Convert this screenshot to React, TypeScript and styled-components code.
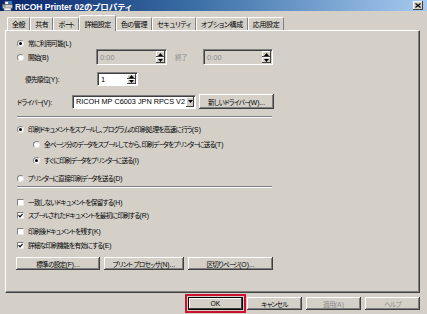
import React from 'react';
import styled, { createGlobalStyle } from 'styled-components';

const Global = createGlobalStyle`
  html, body { margin: 0; padding: 0; background: #d4d0c8; }
  body {
    font-family: "Liberation Sans", "Noto Sans CJK JP", sans-serif;
    font-size: 6.6px;
    letter-spacing: -0.7px;
    color: #000;
    font-feature-settings: "palt";
  }
  * { box-sizing: border-box; }
`;

const Window = styled.div`
  width: 427px;
  height: 314px;
  display: flex;
  flex-direction: column;
  overflow: hidden;
  background: #d4d0c8;
`;

const TitleBar = styled.div`
  height: 11px;
  flex: none;
  display: flex;
  align-items: center;
  padding: 0 4px 0 2px;
  background: linear-gradient(to right, #0a246a 0%, #3a6ea5 45%, #a6caf0 100%);
`;

const TitleText = styled.span`
  color: #fff;
  font-weight: bold;
  font-size: 8.5px;
  letter-spacing: 0;
  margin-left: 2px;
  flex: 1;
  white-space: nowrap;
`;

const CloseBtn = styled.div`
  width: 10px;
  height: 9px;
  background: #d4d0c8;
  box-shadow: inset -1px -1px #404040, inset 1px 1px #fff;
  display: flex;
  align-items: center;
  justify-content: center;
`;

const TabStrip = styled.div`
  height: 19px;
  flex: none;
  display: flex;
  align-items: flex-end;
  padding-left: 7px;
  position: relative;
  z-index: 1;
`;

const Tab = styled.div<{ $active?: boolean }>`
  height: ${(p) => (p.$active ? '16px' : '13px')};
  margin-bottom: ${(p) => (p.$active ? '-1px' : '0')};
  padding: 0 4px;
  display: flex;
  align-items: center;
  white-space: nowrap;
  font-size: 7px;
  letter-spacing: -0.4px;
  background: #d4d0c8;
  border-top: 1px solid #fff;
  border-left: 1px solid #fff;
  border-right: 1px solid #808080;
  border-radius: 2px 2px 0 0;
`;

const Panel = styled.div`
  height: 263px;
  flex: none;
  margin: 0 7px 0 5px;
  border-top: 1px solid #fff;
  border-left: 1px solid #fff;
  border-right: 1px solid #404040;
  border-bottom: 1px solid #404040;
  box-shadow: inset -1px -1px #808080;
  display: flex;
  flex-direction: column;
  padding: 0 0 0 11px;
`;

const Row = styled.div<{ $h: number; $mt: number; $ml?: number }>`
  height: ${(p) => p.$h}px;
  margin-top: ${(p) => p.$mt}px;
  margin-left: ${(p) => p.$ml ?? 0}px;
  display: flex;
  align-items: center;
  white-space: nowrap;
`;

const LabelCell = styled.div<{ $w: number; $pl?: number }>`
  width: ${(p) => p.$w}px;
  padding-left: ${(p) => p.$pl ?? 0}px;
  flex: none;
  display: flex;
  align-items: center;
`;

const Dim = styled.span`
  color: #8c8c8c;
`;

/* the prolonged-sound mark is narrow in the original UI font */
const Choon = styled.span`
  letter-spacing: -2.2px;
`;

/* Latin runs keep normal spacing */
const Latin = styled.span`
  letter-spacing: 0;
  font-size: 6.8px;
`;

const Jp = ({ t }: { t: string }) => (
  <span>
    {t.split(/(ー|[\x21-\x7e]+)/).map((part, i) => {
      if (part === 'ー') return <Choon key={i}>ー</Choon>;
      if (/^[\x21-\x7e]+$/.test(part)) return <Latin key={i}>{part}</Latin>;
      return <React.Fragment key={i}>{part}</React.Fragment>;
    })}
  </span>
);

const RadioCircle = styled.span<{ $on?: boolean }>`
  width: 7px;
  height: 7px;
  flex: none;
  border-radius: 50%;
  background: #fff;
  border: 1px solid #808080;
  border-right-color: #e8e8e8;
  border-bottom-color: #e8e8e8;
  display: inline-flex;
  align-items: center;
  justify-content: center;
  margin-right: 4px;
  &::after {
    content: '';
    width: 3px;
    height: 3px;
    border-radius: 50%;
    background: #000;
    display: ${(p) => (p.$on ? 'block' : 'none')};
  }
`;

const CheckBox = styled.span`
  width: 7px;
  height: 7px;
  flex: none;
  background: #fff;
  border: 1px solid #808080;
  border-right-color: #e8e8e8;
  border-bottom-color: #e8e8e8;
  display: inline-flex;
  align-items: center;
  justify-content: center;
  margin-right: 4px;
`;

const Field = styled.div<{ $w: number; $h: number; $disabled?: boolean }>`
  width: ${(p) => p.$w}px;
  height: ${(p) => p.$h}px;
  flex: none;
  display: flex;
  align-items: stretch;
  background: ${(p) => (p.$disabled ? '#d4d0c8' : '#fff')};
  border-top: 1px solid #808080;
  border-left: 1px solid #808080;
  border-right: 1px solid #fff;
  border-bottom: 1px solid #fff;
  box-shadow: inset 1px 1px #404040;
  padding: 1px;
`;

const FieldText = styled.div<{ $disabled?: boolean; $size?: number }>`
  flex: 1;
  min-width: 0;
  display: flex;
  align-items: center;
  padding-left: 2px;
  color: ${(p) => (p.$disabled ? '#8c8c8c' : '#000')};
  font-size: ${(p) => p.$size ?? 7.5}px;
  letter-spacing: 0;
  white-space: nowrap;
`;

const Spin = styled.div`
  width: 9px;
  flex: none;
  display: flex;
  flex-direction: column;
`;

const SpinBtn = styled.div`
  flex: 1;
  background: #d4d0c8;
  box-shadow: inset -1px -1px #404040, inset 1px 1px #fff;
  display: flex;
  align-items: center;
  justify-content: center;
`;

const DropBtn = styled.div`
  width: 8px;
  flex: none;
  background: #d4d0c8;
  box-shadow: inset -1px -1px #404040, inset 1px 1px #fff;
  display: flex;
  align-items: center;
  justify-content: center;
`;

const Button = styled.div<{ $w: number; $h?: number; $ml?: number; $disabled?: boolean; $default?: boolean }>`
  width: ${(p) => p.$w}px;
  height: ${(p) => p.$h ?? 13}px;
  margin-left: ${(p) => p.$ml ?? 0}px;
  flex: none;
  display: flex;
  align-items: center;
  justify-content: center;
  white-space: nowrap;
  background: #d4d0c8;
  color: ${(p) => (p.$disabled ? '#8c8c8c' : '#000')};
  box-shadow: ${(p) =>
    p.$default
      ? 'inset 0 0 0 1px #000, inset -2px -2px #404040, inset 2px 2px #fff'
      : 'inset -1px -1px #404040, inset 1px 1px #fff, inset -2px -2px #808080'};
  outline: ${(p) => (p.$default ? '2px solid #cc1030' : 'none')};
  outline-offset: 1px;
`;

const Separator = styled.div<{ $mt: number }>`
  width: 255px;
  height: 2px;
  flex: none;
  margin-top: ${(p) => p.$mt}px;
  border-top: 1px solid #808080;
  border-bottom: 1px solid #fff;
`;

const ButtonRow = styled.div<{ $mt: number }>`
  display: flex;
  gap: 4px;
  margin-top: ${(p) => p.$mt}px;
  margin-left: -1px;
`;

const Footer = styled.div`
  display: flex;
  justify-content: flex-end;
  gap: 4px;
  margin-top: 4px;
  padding-right: 7px;
`;

const Up = () => (
  <svg width="5" height="3" viewBox="0 0 5 3"><path d="M2.5 0 L5 3 L0 3 Z" fill="#000" /></svg>
);
const Down = () => (
  <svg width="5" height="3" viewBox="0 0 5 3"><path d="M0 0 L5 0 L2.5 3 Z" fill="#000" /></svg>
);
const Tick = () => (
  <svg width="5" height="5" viewBox="0 0 5 5"><path d="M0.5 2.2 L2 3.8 L4.6 0.8" stroke="#000" strokeWidth="1.2" fill="none" /></svg>
);

const PrinterIcon = () => (
  <svg width="11" height="10" viewBox="0 0 11 10">
    <rect x="3" y="0.5" width="5" height="3" fill="#fff" stroke="#6b6b6b" strokeWidth="0.6" />
    <rect x="0.5" y="3.5" width="10" height="4" fill="#c9c9c9" stroke="#505050" strokeWidth="0.6" />
    <rect x="2" y="7" width="7" height="2.5" fill="#fff" stroke="#6b6b6b" strokeWidth="0.6" />
    <rect x="1.5" y="4.5" width="2" height="1" fill="#2a8a2a" />
    <rect x="6" y="0" width="4" height="3" fill="#3a78c8" />
  </svg>
);

const SpinField = ({ w, h, value, disabled }: { w: number; h: number; value: string; disabled?: boolean }) => (
  <Field $w={w} $h={h} $disabled={disabled}>
    <FieldText $disabled={disabled}>{value}</FieldText>
    <Spin>
      <SpinBtn><Up /></SpinBtn>
      <SpinBtn><Down /></SpinBtn>
    </Spin>
  </Field>
);

const tabs = ['全般', '共有', 'ポート', '詳細設定', '色の管理', 'セキュリティ', 'オプション構成', '応用設定'];

export default function App() {
  return (
    <>
      <Global />
      <Window>
        <TitleBar>
          <PrinterIcon />
          <TitleText>RICOH Printer 02のプロパティ</TitleText>
          <CloseBtn>
            <svg width="6" height="5" viewBox="0 0 6 5"><path d="M0.5 0.5 L5.5 4.5 M5.5 0.5 L0.5 4.5" stroke="#000" strokeWidth="1.1" /></svg>
          </CloseBtn>
        </TitleBar>
        <TabStrip>
          {tabs.map((t) => (
            <Tab key={t} $active={t === '詳細設定'}><Jp t={t} /></Tab>
          ))}
        </TabStrip>
        <Panel>
          <Row $h={12} $mt={6}>
            <RadioCircle $on /><Jp t="常に利用可能(L)" />
          </Row>
          <Row $h={16} $mt={0}>
            <LabelCell $w={79}><RadioCircle /><Jp t="開始(B)" /></LabelCell>
            <SpinField w={71} h={16} value="0:00" disabled />
            <LabelCell $w={36} $pl={8}><Dim>終了</Dim></LabelCell>
            <SpinField w={70} h={16} value="0:00" disabled />
          </Row>
          <Row $h={14} $mt={7}>
            <LabelCell $w={80} $pl={8}><Jp t="優先順位(Y):" /></LabelCell>
            <SpinField w={41} h={14} value="1" />
          </Row>
          <Row $h={15} $mt={8}>
            <LabelCell $w={55} $pl={0}><Jp t="ドライバー(V):" /></LabelCell>
            <Field $w={124} $h={14}>
              <FieldText $size={7.3}>RICOH MP C6003 JPN RPCS V2</FieldText>
              <DropBtn><Down /></DropBtn>
            </Field>
            <Button $w={75} $h={15} $ml={3}><Jp t="新しいドライバー(W)..." /></Button>
          </Row>
          <Separator $mt={7} />
          <Row $h={12} $mt={5}>
            <RadioCircle $on /><Jp t="印刷ドキュメントをスプールし、プログラムの印刷処理を高速に行う(S)" />
          </Row>
          <Row $h={12} $mt={3} $ml={16}>
            <RadioCircle /><Jp t="全ページ分のデータをスプールしてから、印刷データをプリンターに送る(T)" />
          </Row>
          <Row $h={12} $mt={4} $ml={16}>
            <RadioCircle $on /><Jp t="すぐに印刷データをプリンターに送る(I)" />
          </Row>
          <Row $h={12} $mt={6}>
            <RadioCircle /><Jp t="プリンターに直接印刷データを送る(D)" />
          </Row>
          <Separator $mt={2} />
          <Row $h={12} $mt={8}>
            <CheckBox /><Jp t="一致しないドキュメントを保留する(H)" />
          </Row>
          <Row $h={12} $mt={1}>
            <CheckBox><Tick /></CheckBox><Jp t="スプールされたドキュメントを最初に印刷する(R)" />
          </Row>
          <Row $h={12} $mt={4}>
            <CheckBox /><Jp t="印刷後ドキュメントを残す(K)" />
          </Row>
          <Row $h={12} $mt={2}>
            <CheckBox><Tick /></CheckBox><Jp t="詳細な印刷機能を有効にする(E)" />
          </Row>
          <ButtonRow $mt={6}>
            <Button $w={84}><Jp t="標準の設定(F)..." /></Button>
            <Button $w={80}><Jp t="プリント プロセッサ(N)..." /></Button>
            <Button $w={85}><Jp t="区切りページ(O)..." /></Button>
          </ButtonRow>
        </Panel>
        <Footer>
          <Button $w={55} $default><Jp t="OK" /></Button>
          <Button $w={55}><Jp t="キャンセル" /></Button>
          <Button $w={55} $disabled><Jp t="適用(A)" /></Button>
          <Button $w={55} $disabled><Jp t="ヘルプ" /></Button>
        </Footer>
      </Window>
    </>
  );
}
